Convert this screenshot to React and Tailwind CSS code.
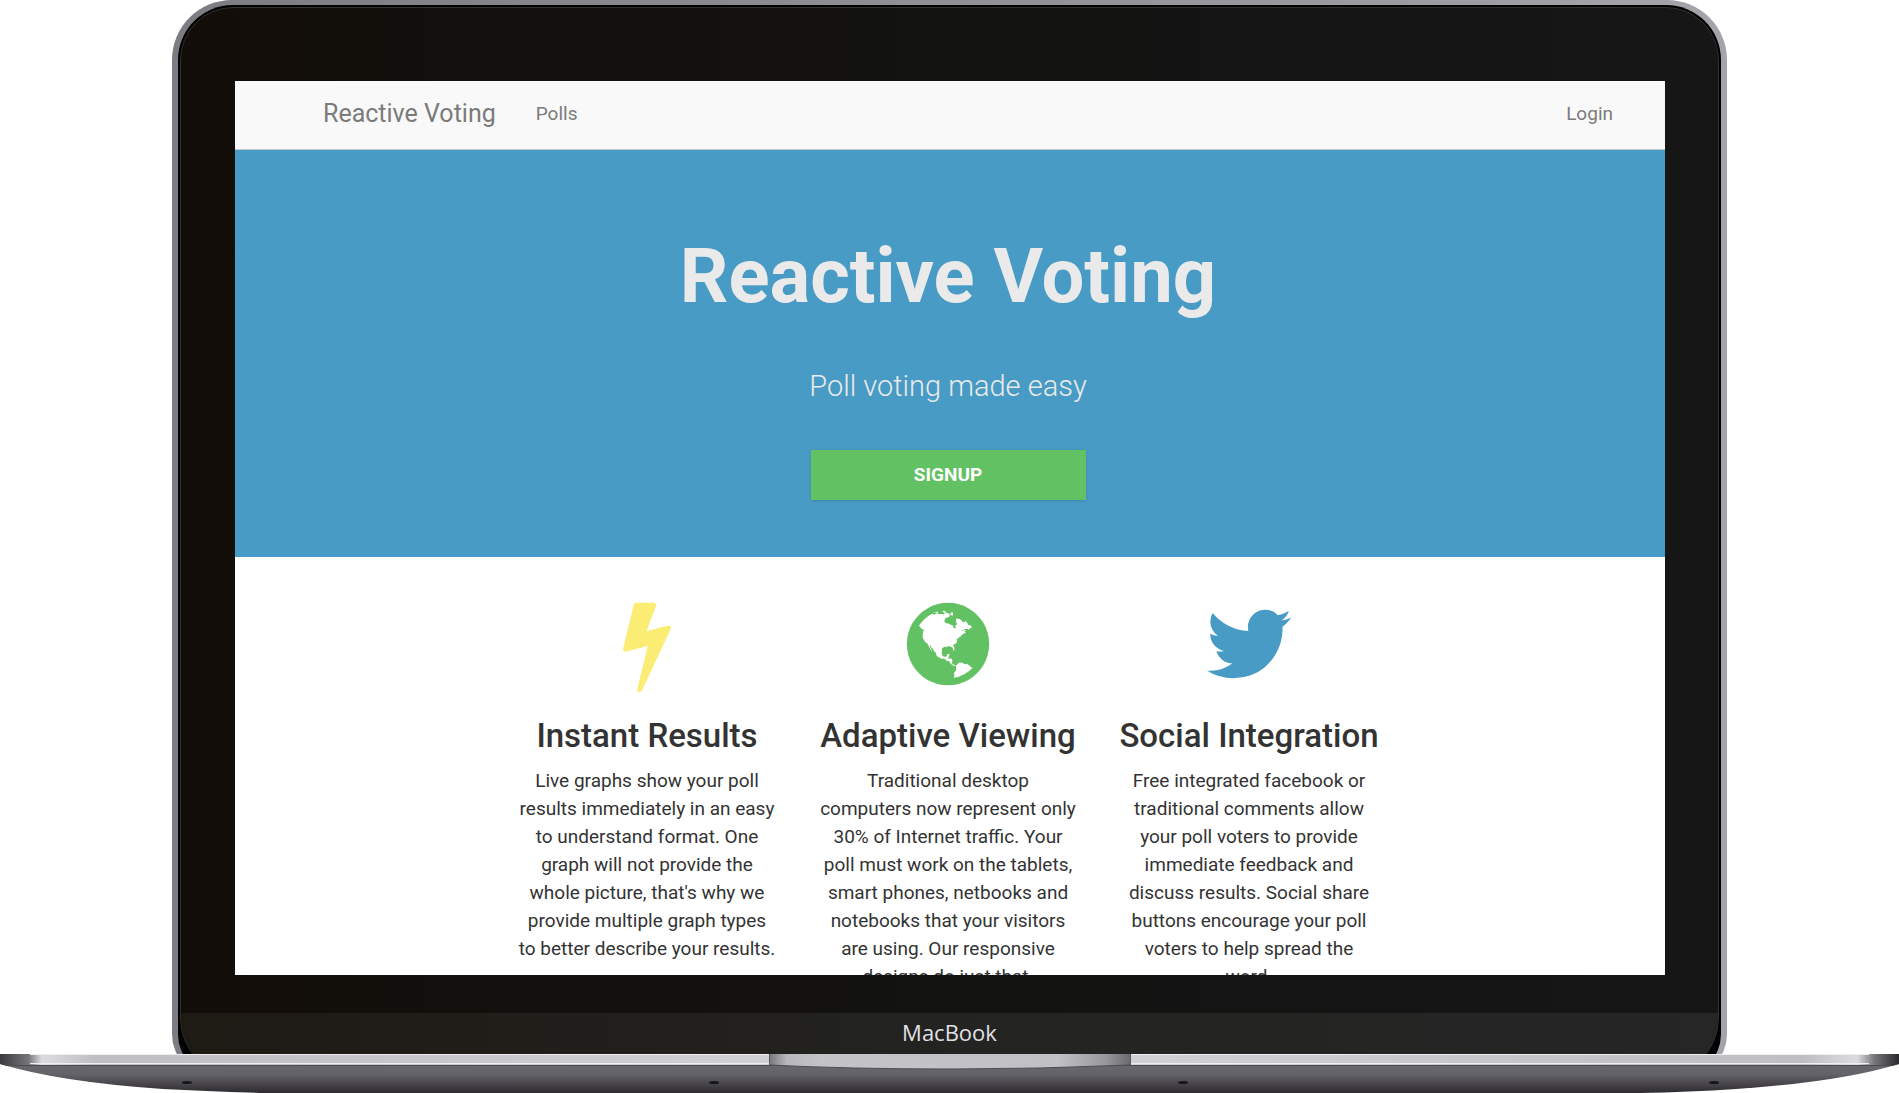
import React from "react";

const icons = {
  bolt: "M1333 566q18 20 7 44l-540 1157q-13 25-42 25-4 0-14-2-17-5-25.5-19t-4.5-30l197-808-406 101q-4 1-12 1-18 0-31-11-18-15-13-39l201-825q4-14 16-23t28-9h328q19 0 32 12.5t13 29.5q0 8-5 18l-171 463 396-98q8-2 12-2 19 0 34 15z",
  globe:
    "M896 128q209 0 385.5 103t279.5 279.5 103 385.5-103 385.5-279.5 279.5-385.5 103-385.5-103-279.5-279.5-103-385.5 103-385.5 279.5-279.5 385.5-103zm274 521q-2 1-9.5 9.5t-13.5 9.5q2 0 4.5-5t5-11 3.5-7q6-7 22-15 14-6 52-12 34-8 51 11-2-2 9.5-13t14.5-12q3-2 15-4.5t15-7.5l2-22q-12 1-17.5-7t-6.5-21q0 2-6 8 0-7-4.5-8t-11.5 1-9 1q-10-3-15-7.5t-8-16.5-4-15q-2-5-9.5-11t-9.5-10q-1-2-2.5-5.5t-3-6.5-4-5.5-5.5-2.5-7 5-7.5 10-4.5 5q-3-2-6-1.5t-4.5 1-4.5 3-5 3.5q-3 2-8.5 3t-8.5 2q15-5-1-11-10-4-16-3 9-4 7.5-12t-8.5-14h5q-1-4-8.5-8.5t-17.5-8.5-13-6q-8-5-34-9.5t-33-.5q-5 6-4.5 10.5t4 14 3.5 12.5q1 6-5.5 13t-6.5 12q0 7 14 15.5t10 21.5q-3 8-16 16t-16 12q-5 8-1.5 18.5t10.5 16.5q2 2 1.5 4t-3.5 4.5-5.5 4-6.5 3.5l-3 2q-11 5-20.5-6t-13.5-26q-7-25-16-30-23-8-29 1-5-13-41-26-25-9-58-4 6-1 0-15-7-15-19-12 3-6 4-17.5t1-13.5q3-13 12-23 1-1 7-8.5t9.5-13.5.5-6q35 4 50-11 5-5 11.5-17t10.5-17q9-6 14-5.5t14.5 5.5 14.5 5q14 1 15.5-11t-7.5-20q12 1 3-17-4-7-8-9-12-4-27 5-8 4 2 8-1-1-9.5 10.5t-16.5 17.5-16-5q-1-1-5.5-13.5t-9.5-13.5q-8 0-16 15 3-8-11-15t-24-8q19-12-8-27-7-4-20.5-5t-19.5 4q-5 7-5.5 11.5t5 8 10.5 5.5 11.5 4 8.5 3q14 10 8 14-2 1-8.5 3.5t-11.5 4.5-6 4q-3 4 0 14t-2 14q-5-5-9-17.5t-7-16.5q7 9-25 6l-10-1q-4 0-16 2t-20.5 1-13.5-8q-4-8 0-20 1-4 4-2-4-3-11-9.5t-10-8.5q-46 15-94 41 6 1 12-1 5-2 13-6.5t10-5.5q34-14 42-7l5-5q14 16 20 25-7-4-30-1-20 6-22 12 7 12 5 18-4-3-11.5-10t-14.5-11-15-5q-16 0-22 1-146 80-235 222 7 7 12 8 4 1 5 9t2.5 11 11.5-3q9 8 3 19 1-1 44 27 19 17 21 21 3 11-10 18-1-2-9-9t-9-4q-3 5 .5 18.5t10.5 12.5q-7 0-9.5 16t-2.5 35.5-1 23.5l2 1q-3 12 5.5 34.5t21.5 19.5q-13 3 20 43 6 8 8 9 3 2 12 7.5t15 10 10 10.5q4 5 10 22.5t14 23.5q-2 6 9.5 20t10.5 23q-1 0-2.5 1t-2.5 1q3 7 15.5 14t15.5 13q1 3 2 10t3 11 8 2q2-20-24-62-15-25-17-29-3-5-5.5-15.5t-4.5-14.5q2 0 6 1.5t8.5 3.5 7.5 4 2 3q-3 7 2 17.5t12 18.5 17 19 12 13q6 6 14 19.5t0 13.5q9 0 20 10.5t17 19.5q5 8 8 26t5 24q2 7 8.5 13.5t12.5 9.5l16 8 13 7q5 2 18.5 10.5t21.5 11.5q10 4 16 4t14.5-2.5 13.5-3.5q15-2 29 15t21 21q36 19 55 11-2 1 .5 7.5t8 15.5 9 14.5 5.5 8.5q5 6 18 15t18 15q6-4 7-9-3 8 7 20t18 10q14-3 14-32-31 15-49-18 0-1-2.5-5.5t-4-8.5-2.5-8.5 0-7.5 5-3q9 0 10-3.5t-2-12.5-4-13q-1-8-11-20t-12-15q-5 9-16 8t-16-9q0 1-1.5 5.5t-1.5 6.5q-13 0-15-1 1-3 2.5-17.5t3.5-22.5q1-4 5.5-12t7.5-14.5 4-12.5-4.5-9.5-17.5-2.5q-19 1-26 20-1 3-3 10.5t-5 11.5-9 7q-7 3-24 2t-24-5q-13-8-22.5-29t-9.5-37q0-10 2.5-26.5t3-25-5.5-24.5q3-2 9-9.5t10-10.5q2-1 4.5-1.5t4.5 0 4-1.5 3-6q-1-1-4-3-3-3-4-3 7 3 28.5-1.5t27.5 1.5q15 11 22-2 0-1-2.5-9.5t-.5-13.5q5 27 29 9 3 3 15.5 5t17.5 5q3 2 7 5.5t5.5 4.5 5-.5 8.5-6.5q10 14 12 24 11 40 19 44 7 3 11 2t4.5-9.5 0-14-1.5-12.5l-1-8v-18l-1-8q-15-3-18.5-12t1.5-18.5 15-18.5q1-1 8-3.5t15.5-6.5 12.5-8q21-19 15-35 7 0 11-9-1 0-5-3t-7.5-5-4.5-2q9-5 2-16 5-3 7.5-11t7.5-10q9 12 21 2 7-8 1-16 5-7 20.5-10.5t18.5-9.5q7 2 8-2t1-12 3-12q4-5 15-9t13-5l17-11q3-4 0-4 18 2 31-11 10-11-6-20 3-6-3-9.5t-15-5.5q3-1 11.5-.5t10.5-1.5q15-10-7-16-17-5-43 12zm-163 877q206-36 351-189-3-3-12.5-4.5t-12.5-3.5q-18-7-24-8 1-7-2.5-13t-8-9-12.5-8-11-7q-2-2-7-6t-7-5.5-7.5-4.5-8.5-2-10 1l-3 1q-3 1-5.5 2.5t-5.5 3-4 3 0 2.5q-21-17-36-22-5-1-11-5.5t-10.5-7-10-1.5-11.5 7q-5 5-6 15t-2 13q-7-5 0-17.5t2-18.5q-3-6-10.5-4.5t-12 4.5-11.5 8.5-9 6.5-8.5 5.5-8.5 7.5q-3 4-6 12t-5 11q-2-4-11.5-6.5t-9.5-5.5q2 10 4 35t5 38q7 31-12 48-27 25-29 40-4 22 12 26 0 7-8 20.5t-7 21.5q0 6 2 16z",
  twitter:
    "M1684 408q-67 98-162 167 1 14 1 42 0 130-38 259.5t-115.5 248.5-184.5 210.5-258 146-323 54.5q-271 0-496-145 35 4 78 4 225 0 401-138-105-2-188-64.5t-114-159.5q33 5 61 5 43 0 85-11-112-23-185.5-111.5t-73.5-205.5v-4q68 38 146 41-66-44-105-115t-39-154q0-88 44-163 121 149 294.5 238.5t371.5 99.5q-8-38-8-74 0-134 94.5-228.5t228.5-94.5q140 0 236 102 109-21 205-78-37 115-142 178 93-10 186-50z",
};

const features = [
  {
    icon: "bolt",
    color: "text-[#fbec74]",
    title: "Instant Results",
    text: "Live graphs show your poll results immediately in an easy to understand format. One graph will not provide the whole picture, that's why we provide multiple graph types to better describe your results.",
  },
  {
    icon: "globe",
    color: "text-[#62c162]",
    title: "Adaptive Viewing",
    text: "Traditional desktop computers now represent only 30% of Internet traffic. Your poll must work on the tablets, smart phones, netbooks and notebooks that your visitors are using. Our responsive designs do just that.",
  },
  {
    icon: "twitter",
    color: "text-[#489bc4]",
    title: "Social Integration",
    text: "Free integrated facebook or traditional comments allow your poll voters to provide immediate feedback and discuss results. Social share buttons encourage your poll voters to help spread the word.",
  },
];

function Feature({ icon, color, title, text }) {
  return (
    <section className="flex w-[301px] flex-col items-center text-center">
      <svg viewBox="0 0 1792 1792" className={`size-24 ${color}`} fill="currentColor" aria-hidden="true">
        <path d={icons[icon]} />
      </svg>
      <h2 className="mt-6 text-[33px] leading-[40px] font-medium whitespace-nowrap">{title}</h2>
      <p className="mt-[11px] w-[257px] text-[19px] leading-[28px]">{text}</p>
    </section>
  );
}

function Site() {
  return (
    <div className="aspect-8/5 overflow-hidden bg-white text-[#333]">
      <nav className="flex h-[69px] items-center border-b border-[#c8c8c8] bg-[#f9f9f9] pr-[52px] pb-[2px] pl-[88px] text-[19px] text-[#7b7b7b]">
        <a href="#home" className="text-[25px]">Reactive Voting</a>
        <a href="#polls" className="ml-[40px]">Polls</a>
        <a href="#login" className="ml-auto">Login</a>
      </nav>
      <header className="flex h-[407px] flex-col items-center bg-[#489bc4] pt-[84px] pr-[4px] text-[#eaeaea]">
        <h1 className="text-[76px] leading-[84px] font-bold">Reactive Voting</h1>
        <p className="mt-[48px] text-[29px] leading-[40px] font-light">Poll voting made easy</p>
        <button className="mt-11 h-[50px] w-[275px] bg-[#62c162] text-[19px] font-bold text-white shadow">SIGNUP</button>
      </header>
      <main className="flex justify-center pt-[39px] pr-[4px]">
        {features.map((f) => (
          <Feature key={f.title} {...f} />
        ))}
      </main>
    </div>
  );
}

function Base() {
  return (
    <svg viewBox="0 0 1899 39" preserveAspectRatio="none" className="relative block h-[39px] w-full" aria-hidden="true">
      <defs>
        <linearGradient id="deck">
          <stop offset="0" stopColor="#3b3a3e" />
          <stop offset=".015" stopColor="#77767b" />
          <stop offset=".022" stopColor="#dddce1" />
          <stop offset=".05" stopColor="#bfbec1" />
          <stop offset=".25" stopColor="#c8c7cb" />
          <stop offset=".5" stopColor="#d6d5da" />
          <stop offset=".75" stopColor="#c8c7cb" />
          <stop offset=".95" stopColor="#bfbec1" />
          <stop offset=".978" stopColor="#dddce1" />
          <stop offset=".987" stopColor="#77767b" />
          <stop offset="1" stopColor="#29282c" />
        </linearGradient>
        <linearGradient id="belly" x2="0" y2="1">
          <stop offset="0" stopColor="#69676d" />
          <stop offset=".35" stopColor="#65636a" />
          <stop offset=".7" stopColor="#464449" />
          <stop offset="1" stopColor="#2d2b2f" />
        </linearGradient>
        <linearGradient id="notch">
          <stop offset="0" stopColor="#77767b" />
          <stop offset=".05" stopColor="#b9b8bd" />
          <stop offset=".15" stopColor="#c4c3c8" />
          <stop offset=".8" stopColor="#c1c0c4" />
          <stop offset=".93" stopColor="#98979c" />
          <stop offset="1" stopColor="#69686d" />
        </linearGradient>
      </defs>
      <path d="M0 10H1899Q1840 28 1736 35Q1690 38 1640 39H260Q205 37 163 35Q60 28 0 10Z" fill="url(#belly)" />
      <path d="M0 0H1899V10L1892 12H7L0 10Z" fill="url(#deck)" />
      <path d="M30 .5H1869M30 9.5H1869" stroke="#efeef2" />
      <path d="M10 11.5H1889" stroke="#4c4b50" />
      <path d="M769 0H1131V11Q1040 15 950 15Q850 15 769 11Z" fill="url(#notch)" />
      <path d="M769 11Q850 15 950 15Q1040 15 1131 11" fill="none" stroke="#4c4b50" />
      <path d="M769.5 0V11M1130.5 0V11" stroke="#5a595e" />
      <g fill="#15151f">
        <ellipse cx="187" cy="28.5" rx="5" ry="1.5" />
        <ellipse cx="714" cy="28.5" rx="5" ry="1.5" />
        <ellipse cx="1183" cy="28.5" rx="5" ry="1.5" />
        <ellipse cx="1714" cy="28.5" rx="5" ry="1.5" />
      </g>
    </svg>
  );
}

export default function App() {
  return (
    <div className="overflow-hidden bg-white font-[Roboto,sans-serif]">
      <div className="mx-[172px] -mb-6 rounded-t-[60px] rounded-b-[44px] bg-linear-to-r from-[#7d7c82] to-[#a5a4aa] px-[6px] pt-[5px]">
        <div className="rounded-t-[55px] rounded-b-[44px] bg-black px-[2px] pt-[2px]">
          <div className="overflow-hidden rounded-t-[53px] rounded-b-[60px] border border-[#303030] bg-linear-to-r from-[#120d09] via-[#131312] to-[#161616]">
            <div className="pt-[73px] pr-[53px] pb-[38px] pl-[54px]">
              <Site />
            </div>
            <div className="flex h-16 items-center justify-center bg-linear-to-r from-[#1e1a14] via-[#232321] to-[#262626] pb-6 font-['Open_Sans',sans-serif] text-[22px] text-[#e0e0e6]">
              MacBook
            </div>
          </div>
        </div>
      </div>
      <Base />
    </div>
  );
}
